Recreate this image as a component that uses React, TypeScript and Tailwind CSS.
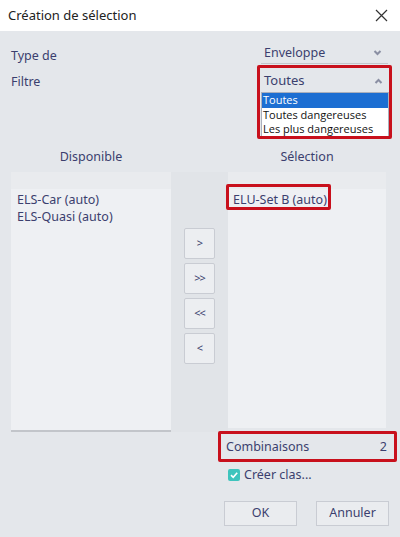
import React from "react";

const font = { fontFamily: '"Noto Sans", "Open Sans", sans-serif' };

function Chevron({ up }: { up?: boolean }) {
  return (
    <svg width="9" height="6" viewBox="0 0 9 6" className="text-[#8a8fa3]">
      {up ? (
        <path d="M1.5 5 L4.5 2 L7.5 5" fill="none" stroke="currentColor" strokeWidth="2" />
      ) : (
        <path d="M1.5 1 L4.5 4 L7.5 1" fill="none" stroke="currentColor" strokeWidth="2" />
      )}
    </svg>
  );
}

function ArrowBtn({ label }: { label: string }) {
  return (
    <div className="w-[31px] h-[31px] border border-[#c9ccd3] rounded-[2px] bg-[#eceef1] flex items-center justify-center text-[11px] text-[#3b3f6e] tracking-[-1px]">
      {label}
    </div>
  );
}

export default function App() {
  return (
    <div className="w-[400px] h-[537px] bg-[#e4e7eb] flex flex-col text-[#3b3f6e] relative overflow-hidden" style={font}>
      {/* title bar */}
      <div className="h-[31px] bg-white flex items-center justify-between pl-[8px] pr-[12px] shrink-0">
        <span className="text-[13px] text-[#222]">Création de sélection</span>
        <svg width="13" height="13" viewBox="0 0 13 13">
          <path d="M1 1 L12 12 M12 1 L1 12" stroke="#333" strokeWidth="1.2" />
        </svg>
      </div>

      {/* Type de */}
      <div className="flex items-start mt-[12px] h-[22px]">
        <span className="ml-[11px] text-[12.5px] leading-[22px] mt-[2px]">Type de</span>
        <div className="ml-auto mr-[12px] w-[127px] h-[21px] border-b border-[#c3c6cc] flex items-center justify-between pl-[3px] pr-[6px]">
          <span className="text-[12.5px] mt-[1px]">Enveloppe</span>
          <Chevron />
        </div>
      </div>

      {/* Filtre */}
      <div className="flex items-start h-[74px] relative">
        <span className="ml-[11px] text-[12.5px] leading-[22px] mt-[6px]">Filtre</span>
        <div className="ml-auto mr-[11px] w-[128px] flex flex-col mt-[4px]">
          <div className="h-[23px] flex items-center justify-between pl-[3px] pr-[6px]">
            <span className="text-[13px] mt-[1px]">Toutes</span>
            <Chevron up />
          </div>
          <div className="bg-white border border-[#aab0bd] flex flex-col text-[11px] leading-[14.5px] text-[#111]" style={{ fontFamily: '"Open Sans", "Noto Sans", sans-serif' }}>
            <span className="bg-[#1c6ed2] text-white pl-[1px]">Toutes</span>
            <span className="pl-[1px]">Toutes dangereuses</span>
            <span className="pl-[1px]">Les plus dangereuses</span>
          </div>
        </div>
        <div className="absolute left-[257px] top-[0px] w-[135px] h-[74px] border-[3px] border-[#c8101c] rounded-[2px]" />
      </div>

      {/* headers */}
      <div className="flex h-[32px] items-center mt-[1px] pt-[3px]">
        <span className="w-[171px] pl-[11px] text-center text-[12.5px]">Disponible</span>
        <span className="w-[57px]" />
        <span className="w-[158px] text-center text-[12.5px]">Sélection</span>
      </div>

      {/* lists */}
      <div className="flex h-[260px] relative">
        <div className="ml-[11px] w-[160px] h-[260px] flex flex-col border-b-2 border-[#c2c5ca]">
          <div className="h-[17px] bg-[#e9ebee]" />
          <div className="flex-1 bg-[#eef0f3] pl-[6px] pt-[2px] text-[12.5px] leading-[17px] flex flex-col">
            <span>ELS-Car (auto)</span>
            <span>ELS-Quasi (auto)</span>
          </div>
        </div>
        <div className="w-[57px] bg-[#e1e4e8] flex flex-col items-center pt-[56px] gap-[4px]">
          <ArrowBtn label=">" />
          <ArrowBtn label=">>" />
          <ArrowBtn label="<<" />
          <ArrowBtn label="<" />
        </div>
        <div className="w-[158px] h-[256px] flex flex-col">
          <div className="h-[17px] bg-[#e9ebee]" />
          <div className="flex-1 bg-[#eef0f3] pl-[5px] pt-[2px] text-[12.5px] leading-[17px]">
            <span>ELU-Set B (auto)</span>
          </div>
        </div>
        <div className="absolute left-[226px] top-[12px] w-[105px] h-[26px] border-[3px] border-[#c8101c] rounded-[2px]" />
      </div>

      {/* combinaisons */}
      <div className="flex relative h-[31px] mt-[-1px]">
        <div className="ml-[218px] w-[179px] h-[31px] border-[3px] border-[#c8101c] rounded-[2px] flex items-center justify-between pl-[5px] pr-[7px] pt-[2px] text-[12.5px]">
          <span>Combinaisons</span>
          <span>2</span>
        </div>
      </div>

      {/* checkbox */}
      <div className="flex items-center ml-[228px] mt-[6px] h-[14px] gap-[4px]">
        <div className="w-[12px] h-[12px] rounded-[2px] bg-[#3ec4bd] flex items-center justify-center">
          <svg width="10" height="10" viewBox="0 0 10 10">
            <path d="M2 5.2 L4.2 7.3 L8.2 2.8" fill="none" stroke="white" strokeWidth="1.6" />
          </svg>
        </div>
        <span className="text-[12.5px]">Créer clas...</span>
      </div>

      {/* buttons */}
      <div className="flex ml-[224px] mt-[19px] gap-[19px]">
        <div className="w-[73px] h-[25px] border border-[#c9ccd3] bg-[#eaecef] flex items-center justify-center text-[12.5px]">OK</div>
        <div className="w-[73px] h-[25px] border border-[#c9ccd3] bg-[#eaecef] flex items-center justify-center text-[12.5px]">Annuler</div>
      </div>
    </div>
  );
}
